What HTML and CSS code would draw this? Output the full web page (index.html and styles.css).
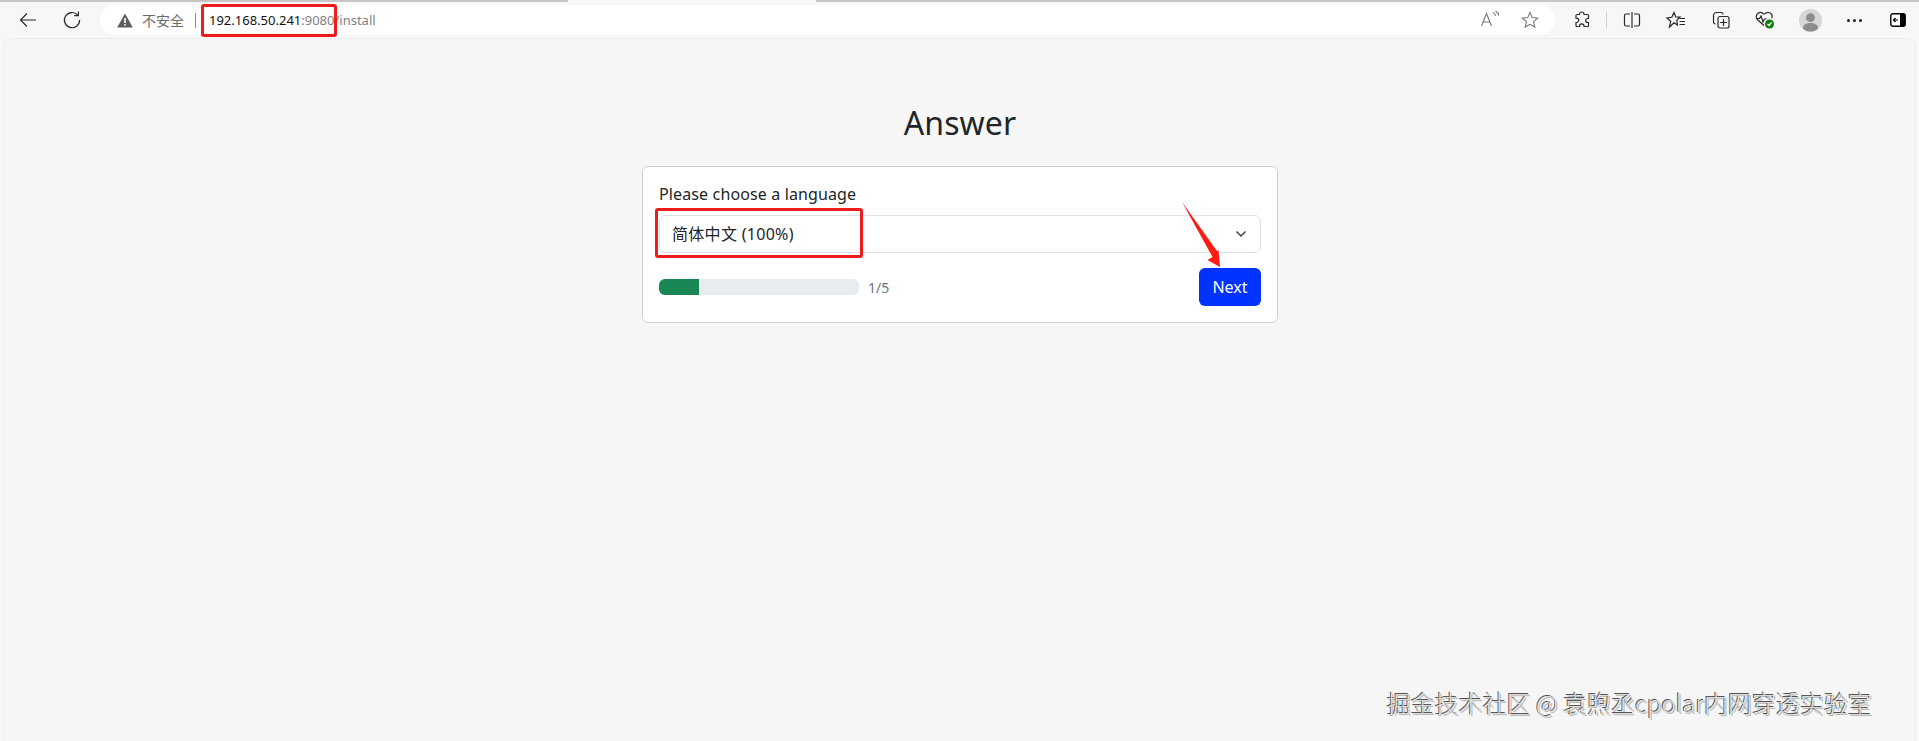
FILE: index.html
```html
<!DOCTYPE html>
<html lang="en">
<head>
<meta charset="utf-8">
<title>Answer</title>
<link rel="stylesheet" href="styles.css">
</head>
<body>
<div class="tabstrip"><div class="tab-gap"></div></div>
<header class="toolbar">
  <button class="tb back" aria-label="Back"><svg width="20" height="20" viewBox="0 0 20 20"><path d="M18 10H2.500M9 3.500 2.500 10 9 16.500" class="ic"/></svg></button>
  <button class="tb reload" aria-label="Reload"><svg width="20" height="20" viewBox="0 0 20 20"><path d="M15.800 5.200A7.600 7.600 0 1 0 17.600 10M16.400 1.500v4.200h-4.200" class="ic"/></svg></button>
  <div class="omnibox">
    <svg class="warn" width="16" height="15" viewBox="0 0 16 15"><path d="M8 .5 15.800 14.500H.2Z" fill="#5c5c5c"/><path d="M7.200 5h1.600v5H7.200ZM7.200 11h1.600v1.600H7.200Z" fill="#fff"/></svg>
    <span class="insecure">不安全</span>
    <span class="sep"></span>
    <span class="url"><b>192.168.50.241</b>:9080/install</span>
    <span class="spring"></span>
    <svg class="read" width="22" height="20" viewBox="0 0 22 20"><path d="M1.500 16 6.500 3.500 11.500 16M3.300 12h6.400" class="ig"/><path d="M13 2.500c1.500.8 2.300 2 2.500 3.500M15.500 1c2 1 3 2.800 3.200 4.500" class="ig"/></svg>
    <svg class="star" width="18" height="18" viewBox="0 0 18 18"><path d="M9 1.500 11.200 6.600 16.700 7.100 12.500 10.700 13.800 16.100 9 13.300 4.200 16.100 5.500 10.700 1.300 7.100 6.800 6.600Z" class="ig"/></svg>
  </div>
  <div class="tools">
    <svg class="t-ext" width="18" height="18" viewBox="0 0 18 18"><path d="M6.500 2.800a2.300 2.300 0 0 1 4.500 0v.7h3.500a1 1 0 0 1 1 1V7.500h-.8a2 2 0 0 0 0 4h.8v3a1 1 0 0 1-1 1H11v-.5a2.200 2.200 0 0 0-4.400 0v.5H4a1 1 0 0 1-1-1v-3h.5a2.200 2.200 0 0 0 0-4.400H3V4.500a1 1 0 0 1 1-1h2.500Z" class="ic"/></svg>
    <span class="t-sep"></span>
    <svg class="t-split" width="18" height="18" viewBox="0 0 18 18"><path d="M7 3H3a1.500 1.500 0 0 0-1.500 1.500v9A1.500 1.500 0 0 0 3 15h4M11 3h4a1.500 1.500 0 0 1 1.500 1.500v9A1.500 1.500 0 0 1 15 15h-4M9 1v16" class="ic"/></svg>
    <svg class="t-fav" width="20" height="18" viewBox="0 0 20 18"><path d="M8 1.500 9.800 6H14L10.800 9.300 11.500 14 8 11.700 3.500 16 4.700 10.200 1 7 5.800 6.300Z" class="ic"/><path d="M13.500 7.500H19M13.500 10.500H19M13.500 13.500H19" class="ic"/></svg>
    <svg class="t-col" width="18" height="18" viewBox="0 0 18 18"><rect x="6" y="5.500" width="11" height="11.500" rx="2" class="ic"/><path d="M11.500 8v7M8 11.500h7" class="ic"/><path d="M3.500 13A2 2 0 0 1 1.500 11V4.500a3 3 0 0 1 3-3H9a2 2 0 0 1 2 2" class="ic"/></svg>
    <svg class="t-health" width="20" height="20" viewBox="0 0 20 20"><path d="M9 4.500C7.500 2.500 5 1.800 3 3.200.8 4.800.7 7.500 2.500 9.800L9 15.500M9 4.500c1.500-2 4.500-2.700 6.500-1.200 1.800 1.400 2 3.300 1.200 5" class="ic"/><path d="M1 8.500h3.500L6 6l2 6 1.500-3h2" class="ic"/><circle cx="14.500" cy="14" r="4.500" fill="#107c10"/><path d="M12.500 14l1.500 1.500 2.500-3" fill="none" stroke="#fff" stroke-width="1.200"/></svg>
    <span class="avatar"><svg width="23" height="23" viewBox="0 0 24 24"><circle cx="12" cy="12" r="12" fill="#d6d6d6"/><circle cx="12" cy="9" r="4.600" fill="#8c8c8c"/><path d="M4 20c.5-4 4-5.500 8-5.500s7.500 1.500 8 5.500a11 11 0 0 1-16 0Z" fill="#8c8c8c"/></svg></span>
    <span class="dots"><i></i><i></i><i></i></span>
    <svg class="t-side" width="16" height="14" viewBox="0 0 16 14"><rect x=".8" y=".8" width="14.400" height="12.400" rx="2" fill="#fff" stroke="#000" stroke-width="1.400"/><path d="M10 .8h3.500a1.700 1.700 0 0 1 1.700 1.700v9a1.700 1.700 0 0 1-1.700 1.700H10Z" fill="#000"/><path d="M8 7H3.500M5.500 5 3.500 7l2 2" fill="none" stroke="#000" stroke-width="1.200"/></svg>
  </div>
</header>

<main class="page">
  <h1 class="title">Answer</h1>
  <section class="card">
    <label class="label">Please choose a language</label>
    <div class="select">
      <span class="select-value">简体中文 (100%)</span>
      <svg width="12" height="8" viewBox="0 0 12 8"><path d="M1.500 1.500 6 6l4.500-4.500" fill="none" stroke="#444" stroke-width="1.500"/></svg>
    </div>
    <div class="footer">
      <div class="progress-wrap">
        <div class="progress"><div class="bar"></div></div>
        <span class="step">1/5</span>
      </div>
      <button class="next">Next</button>
    </div>
  </section>
</main>

<div class="mark mark-url"></div>
<div class="mark mark-select"></div>
<svg class="arrow" width="44" height="70" viewBox="0 0 44 70"><path d="M2 2 37 51 38.500 50 40 67 27.500 60 32.500 57Z" fill="#fb1d13"/></svg>
<div class="watermark">掘金技术社区 @ 袁煦丞cpolar内网穿透实验室</div>
</body>
</html>
```
FILE: styles.css
```css
* { box-sizing: border-box; }
html, body { height: 100%; }
body {
  margin: 0;
  height: 741px;
  overflow: hidden;
  display: flex;
  flex-direction: column;
  background: #f7f7f7;
  color: #212529;
  font-family: "Noto Sans", "Noto Sans CJK SC", sans-serif;
  font-size: 16px;
}
.tabstrip { height: 2px; background: #c6c6c6; display: flex; justify-content: center; flex: none; padding-right: 535px; }
.tab-gap { width: 248px; background: #f7f7f7; }
.toolbar { height: 36px; flex: none; display: flex; align-items: center; padding: 0 12px 0 18px; }
.tb { width: 20px; height: 20px; border: 0; padding: 0; background: none; display: flex; }
.tb.reload { margin-left: 24px; }
.ic { fill: none; stroke: #2a2a2a; stroke-width: 1.200; }
.ig { fill: none; stroke: #777; stroke-width: 1.100; }
.omnibox {
  margin-left: 18px;
  width: 1455px;
  height: 30px;
  background: #fff;
  border-radius: 15px;
  display: flex;
  align-items: center;
  padding-left: 17px;
  padding-right: 16px;
}
.warn { flex: none; }
.insecure { margin-left: 9px; font-size: 14px; color: #6b6b6b; font-family: "Noto Sans CJK SC", sans-serif; }
.sep { width: 1px; height: 15px; background: #8a8a8a; margin: 0 13px 0 11px; }
.url { font-size: 13px; color: #808080; font-family: "Noto Sans", sans-serif; }
.url b { font-weight: 400; color: #111; }
.spring { flex: 1; }
.star { margin-left: 19px; }
.tools { flex: 1; display: flex; align-items: center; padding-left: 18px; }
.t-sep { width: 1px; height: 16px; background: #d4d4d4; margin: 0 16px 0 15px; }
.t-fav { margin-left: 25px; }
.t-col { margin-left: 26px; }
.t-health { margin-left: 25px; }
.avatar { margin-left: 24px; display: flex; }
.dots { margin-left: 25px; display: flex; gap: 3px; }
.dots i { width: 3px; height: 3px; border-radius: 50%; background: #222; }
.t-side { margin-left: 28px; }

.page {
  flex: 1;
  margin: 0 3px;
  background: #f6f6f6;
  border: 1px solid #eee;
  border-bottom: 0;
  border-radius: 8px 8px 0 0;
  padding: 65px 0 0 1px;
  display: flex;
  flex-direction: column;
  align-items: center;
}
.title { margin: 0 0 24px; font-size: 32px; font-weight: 400; line-height: 38px; letter-spacing: .1px; }
.card {
  width: 636px;
  background: #fff;
  border: 1px solid #cfcfcf;
  border-radius: 6px;
  padding: 16px;
}
.label { display: block; line-height: 22px; margin-bottom: 10px; letter-spacing: .13px; }
.select {
  height: 38px;
  border: 1px solid #dee2e6;
  border-radius: 6px;
  padding: 0 13px 0 12px;
  display: flex;
  align-items: center;
  justify-content: space-between;
}
.select-value { color: #212529; padding-bottom: 2px; letter-spacing: .3px; }
.footer { margin-top: 15px; display: flex; align-items: center; justify-content: space-between; }
.progress-wrap { display: flex; align-items: center; }
.progress { width: 200px; height: 16px; border-radius: 6px; background: #e9ecef; overflow: hidden; }
.bar { width: 40px; height: 100%; background: #198754; }
.step { margin-left: 9px; font-size: 14px; color: #6c757d; }
.next {
  width: 62px;
  height: 38px;
  border: 0;
  border-radius: 6px;
  background: #0033ff;
  color: #fff;
  font: inherit;
  padding: 0;
}
.mark { position: absolute; border: 3px solid #f01c1c; border-radius: 3px; }
.mark-url { left: 201px; top: 4px; width: 136px; height: 33px; }
.mark-select { left: 655px; top: 208px; width: 208px; height: 50px; }
.arrow { position: absolute; left: 1180px; top: 200px; }
.watermark {
  position: absolute;
  right: 47px;
  top: 686px;
  font-family: "Noto Sans CJK SC", sans-serif;
  font-size: 24px;
  font-weight: 300;
  line-height: 34px;
  white-space: nowrap;
  color: #dcdcdc;
  text-shadow: -1px -1px 0 #555, 1px 1px 0 #bbb;
}
```
